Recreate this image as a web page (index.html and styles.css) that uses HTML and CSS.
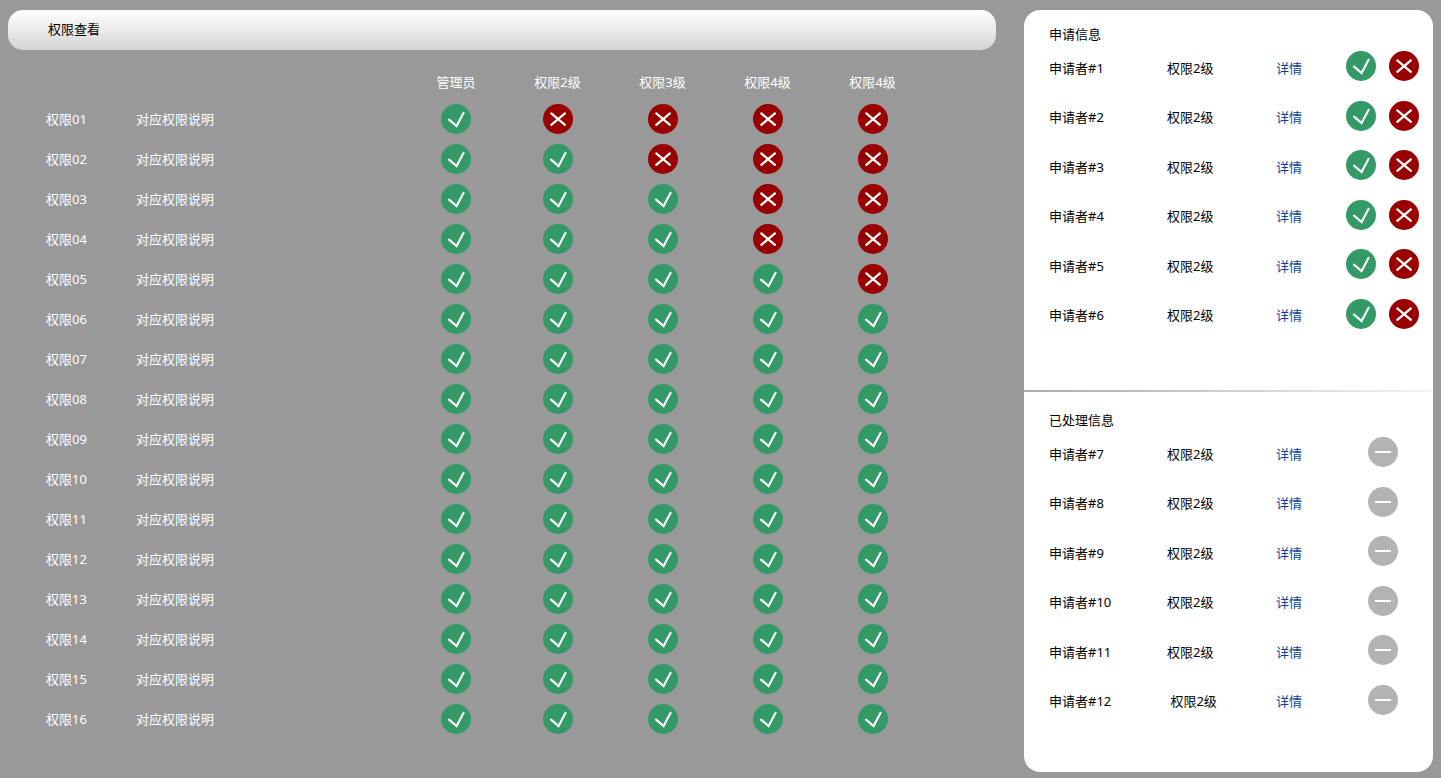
FILE: index.html
```html
<!DOCTYPE html>
<html lang="zh-CN">
<head>
<meta charset="utf-8">
<meta name="viewport" content="width=device-width, initial-scale=1">
<title>权限查看</title>
<link rel="stylesheet" href="styles.css">
</head>
<body>
<svg class="sprite" aria-hidden="true">
  <symbol id="yes" viewBox="0 0 30 30"><circle cx="15" cy="15" r="15" fill="#396"/><path d="M8 15.6l7.6 6.4L22.6 8.8" fill="none" stroke="#fff" stroke-width="2.1" stroke-linecap="round"/></symbol>
  <symbol id="no" viewBox="0 0 30 30"><circle cx="15" cy="15" r="15" fill="#900"/><path d="M8.3 9.4l13.6 11.4M21.9 9.4L8.3 20.8" fill="none" stroke="#fff" stroke-width="2.3" stroke-linecap="round"/></symbol>
  <symbol id="done" viewBox="0 0 30 30"><circle cx="15" cy="15" r="15" fill="#b3b3b3"/><path d="M7.8 15h14.4" fill="none" stroke="#fff" stroke-width="2.1" stroke-linecap="round"/></symbol>
</svg>
<div class="layout">
  <main>
    <h1 class="title-bar">权限查看</h1>
    <table class="matrix">
      <colgroup><col class="col-name"><col class="col-desc"><col class="col-admin"><col class="col-level" span="4"></colgroup>
      <thead>
        <tr><td></td><td></td><th scope="col">管理员</th><th scope="col">权限2级</th><th scope="col">权限3级</th><th scope="col">权限4级</th><th scope="col">权限4级</th></tr>
      </thead>
      <tbody id="matrix-body"></tbody>
    </table>
  </main>
  <aside class="panel">
    <section class="pending">
      <h2>申请信息</h2>
      <table class="requests"><colgroup><col class="col-who"><col class="col-grade"><col class="col-link"><col class="col-actions"></colgroup><tbody id="pending-body"></tbody></table>
    </section>
    <section class="handled">
      <h2>已处理信息</h2>
      <table class="requests"><colgroup><col class="col-who"><col class="col-grade"><col class="col-link"><col class="col-actions"></colgroup><tbody id="handled-body"></tbody></table>
    </section>
  </aside>
</div>
<script src="app.js"></script>
</body>
</html>
```
FILE: styles.css
```css
* {
  box-sizing: border-box;
}

body {
  margin: 0;
  padding: 10px 8px 6px;
  min-height: 100vh;
  background: #999;
  color: #000;
  font: 13px/18px "Noto Sans", "Noto Sans CJK SC", sans-serif;
}

.sprite {
  display: none;
}

.layout {
  display: grid;
  grid-template-columns: 988fr 409fr;
  gap: 28px;
  min-height: calc(100vh - 16px);
}

h1,
h2 {
  margin: 0;
  font-size: 13px;
  font-weight: 400;
}

.title-bar {
  padding: 10px 40px 12px;
  border-radius: 15px;
  background: linear-gradient(#fff, #d4d4d4);
}

table {
  border-collapse: collapse;
  table-layout: fixed;
  width: 100%;
}

td,
th {
  padding: 0;
  font-weight: 400;
  text-align: left;
  vertical-align: middle;
}

main {
  display: flex;
  flex-direction: column;
  gap: 14px;
}

.matrix {
  width: auto;
  margin: 0 71px 0 38px;
  color: #fff;
}

.matrix thead tr {
  height: 35px;
}

.matrix tbody tr {
  height: 40px;
}

.matrix th[scope="col"],
.matrix .mark {
  text-align: center;
}

.col-name {
  width: 90px;
}

.col-desc {
  width: 271px;
}

.col-admin {
  width: 98px;
}

.col-level {
  width: 105px;
}

.icon {
  display: block;
  width: 30px;
  height: 30px;
  margin: 0 auto;
}

.panel {
  border-radius: 16px;
  background: #fff;
}

.pending {
  padding: 15px 0 50px 25px;
  border-bottom: 2px solid;
  border-image: linear-gradient(90deg, #aaa, #f4f4f4) 1;
}

.handled {
  padding: 19px 0 40px 25px;
}

.requests {
  height: 297px;
}

.col-who {
  width: 118px;
}

.col-grade {
  width: 109px;
}

.col-link {
  width: 56px;
}

.col-actions {
  width: 101px;
}

.requests a {
  color: #0b419b;
  text-decoration: none;
}

.actions {
  display: flex;
  justify-content: center;
  gap: 13px;
  padding-bottom: 3px;
}

.actions .icon {
  margin: 0;
}

button {
  padding: 0;
  border: 0;
  border-radius: 50%;
  background: none;
  cursor: pointer;
}
```
FILE: app.js
```js
const labels = { yes: "允许", no: "拒绝", done: "已处理" };
const icon = (name) =>
  `<svg class="icon" role="img" aria-label="${labels[name]}"><use href="#${name}"/></svg>`;
const button = (name) =>
  `<button type="button" aria-label="${labels[name]}">${icon(name)}</button>`;

// Number of denied levels, counted from the lowest one, for each permission.
const denied = [4, 3, 2, 2, 1];

let rows = "";
for (let i = 0; i < 16; i++) {
  const blocked = denied[i] || 0;
  let marks = "";
  for (let c = 0; c < 5; c++) {
    marks += `<td class="mark">${icon(c >= 5 - blocked ? "no" : "yes")}</td>`;
  }
  rows += `<tr><th scope="row">权限${String(i + 1).padStart(2, "0")}</th><td>对应权限说明</td>${marks}</tr>`;
}
document.getElementById("matrix-body").innerHTML = rows;

const request = (n, actions) =>
  `<tr><td>申请者#${n}</td><td>${n === 12 ? "&nbsp;" : ""}权限2级</td><td><a href="#request-${n}">详情</a></td><td><div class="actions">${actions}</div></td></tr>`;

let pending = "";
let handled = "";
for (let n = 1; n <= 6; n++) {
  pending += request(n, button("yes") + button("no"));
  handled += request(n + 6, icon("done"));
}
document.getElementById("pending-body").innerHTML = pending;
document.getElementById("handled-body").innerHTML = handled;
```
